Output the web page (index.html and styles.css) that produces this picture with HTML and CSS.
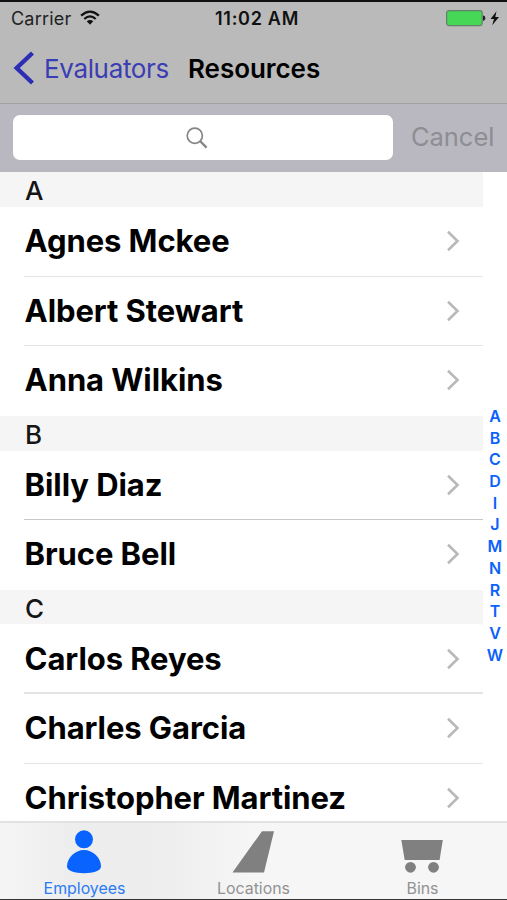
FILE: index.html
```html
<!DOCTYPE html>
<html lang="en">
<head>
<meta charset="utf-8">
<title>Resources</title>
<link rel="stylesheet" href="styles.css">
</head>
<body>
<div class="screen">
  <header class="top">
    <div class="status">
      <div class="status-left">
        <span class="carrier">Carrier</span>
        <svg class="wifi" width="20" height="16" viewBox="0 0 20 16"><g fill="none" stroke="#111" stroke-width="2.3"><path d="M1.100 5.600Q10-2.400 18.900 5.600"/><path d="M4.300 9Q10 3.800 15.700 9"/></g><path d="M6.700 11.300Q10 8.600 13.300 11.300L10 14.700Z" fill="#111"/></svg>
      </div>
      <span class="clock">11:02 AM</span>
      <div class="status-right">
        <svg width="54" height="18" viewBox="0 0 54 18"><rect x=".6" y="1.600" width="35.600" height="15" rx="2.500" fill="#45d755" stroke="#62806a" stroke-width="1.200"/><path d="M37 6.500q2.300 0 2.300 2.700T37 12z" fill="#222"/><path d="M50.500 2.200L44.500 9.900H48L46.200 16.200L53 7.900H49.300Z" fill="#111"/></svg>
      </div>
    </div>
    <nav class="nav">
      <svg class="back-icon" width="21" height="34" viewBox="0 0 21 34"><path d="M19.500 2L3.700 17L19.500 32" fill="none" stroke="#2c2fb4" stroke-width="4.400"/></svg>
      <span class="back">Evaluators</span>
      <h1 class="title">Resources</h1>
    </nav>
  </header>
  <div class="search">
    <div class="field"><svg width="22" height="22" viewBox="0 0 22 22"><g fill="none" stroke="#858585"><circle cx="8.800" cy="8.800" r="7.600" stroke-width="1.700"/><path d="M14 14L20.600 20.600" stroke-width="2.300"/></g></svg></div>
    <span class="cancel">Cancel</span>
  </div>
  <main class="content">
    <div class="list">
      <h2 class="section">A</h2>
      <div class="row"><span>Agnes Mckee</span><svg class="chev" viewBox="0 0 14 22"><path d="M2 1.800L11.500 11L2 20.200"/></svg></div>
      <div class="row"><span>Albert Stewart</span><svg class="chev" viewBox="0 0 14 22"><path d="M2 1.800L11.500 11L2 20.200"/></svg></div>
      <div class="row"><span>Anna Wilkins</span><svg class="chev" viewBox="0 0 14 22"><path d="M2 1.800L11.500 11L2 20.200"/></svg></div>
      <h2 class="section">B</h2>
      <div class="row strong"><span>Billy Diaz</span><svg class="chev" viewBox="0 0 14 22"><path d="M2 1.800L11.500 11L2 20.200"/></svg></div>
      <div class="row"><span>Bruce Bell</span><svg class="chev" viewBox="0 0 14 22"><path d="M2 1.800L11.500 11L2 20.200"/></svg></div>
      <h2 class="section">C</h2>
      <div class="row thick"><span>Carlos Reyes</span><svg class="chev" viewBox="0 0 14 22"><path d="M2 1.800L11.500 11L2 20.200"/></svg></div>
      <div class="row"><span>Charles Garcia</span><svg class="chev" viewBox="0 0 14 22"><path d="M2 1.800L11.500 11L2 20.200"/></svg></div>
      <div class="row"><span>Christopher Martinez</span><svg class="chev" viewBox="0 0 14 22"><path d="M2 1.800L11.500 11L2 20.200"/></svg></div>
    </div>
    <div class="index"><span>A</span><span>B</span><span>C</span><span>D</span><span>I</span><span>J</span><span>M</span><span>N</span><span>R</span><span>T</span><span>V</span><span>W</span></div>
  </main>
  <footer class="tabs">
    <div class="tab active"><svg width="44" height="44" viewBox="0 0 44 44"><circle cx="22" cy="9.300" r="9"/><path d="M22 20C31 20 39 28 39 36.500C39 41 31 43.200 22 43.200S5 41 5 36.500C5 28 13 20 22 20Z"/></svg><span>Employees</span></div>
    <div class="tab"><svg width="44" height="44" viewBox="0 0 44 44"><path d="M31 1.200H43L33 42.500H1.500Z"/></svg><span>Locations</span></div>
    <div class="tab"><svg width="44" height="44" viewBox="0 0 44 44"><path d="M1.300 10H42.800L39.600 30H4.700Z"/><circle cx="10.500" cy="37.300" r="5.400"/><circle cx="33.500" cy="37.300" r="5.400"/></svg><span>Bins</span></div>
  </footer>
</div>
</body>
</html>
```
FILE: styles.css
```css
* { box-sizing: border-box; }
body { margin: 0; font-family: Inter, "Liberation Sans", sans-serif; color: #000; background: #fff; }
svg { display: block; flex: none; }
h1, h2 { margin: 0; }
.screen { display: flex; flex-direction: column; height: 900px; overflow: hidden; border-bottom: 1px solid #333; }
.top { height: 104px; flex: none; background: #bababa; border-top: 2px solid #111; border-bottom: 1px solid #a2a2a5; }
.status { display: grid; grid-template-columns: 1fr auto 1fr; align-items: center; height: 32px; padding: 0 7px 0 11px; }
.status-left { display: flex; align-items: center; gap: 8px; }
.carrier { font-size: 18px; color: #222; letter-spacing: .22px; }
.clock { font-size: 18px; font-weight: 600; color: #111; letter-spacing: .7px; margin-left: 3px; }
.status-right { display: flex; justify-content: flex-end; }
.nav { display: flex; align-items: center; height: 68px; padding-left: 13px; }
.back { font-size: 26px; letter-spacing: -.35px; color: #3b3db5; margin-left: 10px; width: 144px; }
.title { font-size: 26px; font-weight: 600; letter-spacing: -.05px; }
.search { height: 68px; flex: none; display: flex; align-items: center; padding: 0 13px 1px; background: #b9b8c0; }
.field { width: 380px; flex: none; height: 45px; border-radius: 7px; background: #fff; display: flex; align-items: center; justify-content: center; }
.field svg { margin-left: -12px; }
.cancel { margin-left: 18px; font-size: 25.500px; line-height: 32px; margin-top: -2px; letter-spacing: -.05px; color: #8d8d92; }
.content { flex: 1; min-height: 0; overflow: hidden; display: flex; background: #fff; }
.list { width: 483px; padding-top: .3px; }
.section { height: 34.8px; background: #f5f5f5; color: #151515; padding-left: 25px; font-size: 26px; font-weight: 500; line-height: 37.500px; }
.row { height: 69.55px; display: flex; align-items: center; justify-content: space-between; margin-left: 24px; padding: 0 23px 0 .6px; border-bottom: 1px solid #e4e4e4; font-size: 31px; line-height: 38px; font-weight: 700; letter-spacing: -.08px; white-space: nowrap; }
.row.strong { border-color: #c8c8c8; }
.row.thick { border-bottom: 2px solid #e4e4e4; padding-top: 1px; }
.row:has(+ .section) { border-color: transparent; }
.chev { width: 14px; height: 22px; fill: none; stroke: #b9b9bb; stroke-width: 2.6; }
.index { width: 24px; padding-top: 233px; display: flex; flex-direction: column; align-items: center; color: #0b62fa; font-size: 16px; font-weight: 600; }
.index span { height: 21.7px; line-height: 22px; }
.tabs { height: 78px; flex: none; display: flex; border-top: 2px solid #e2e2e2; background: linear-gradient(90deg, #f5f5f5, #ededed 15%, #eee 33%, #f6f6f6 50%, #f6f6f6); }
.tab { flex: 1; display: flex; flex-direction: column; align-items: center; padding-top: 7px; color: #929292; font-size: 15.900px; line-height: 20px; fill: #808080; }
.tab span { margin-top: 5px; }
.tab svg { margin-left: -1px; }
.tab.active { color: #2b7bf5; fill: #0863ff; }
```
